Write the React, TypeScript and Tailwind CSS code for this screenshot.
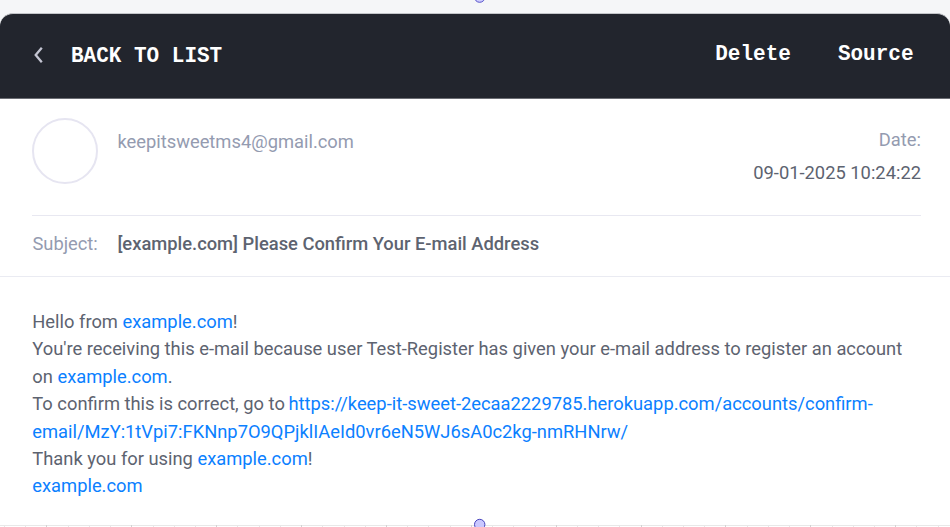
import React from 'react';

const ticks = Array.from({ length: 45 }, (_, i) => ({
  x: 4 + i * 21.22,
  major: i % 4 === 2,
}));

function Link({ children }: { children: React.ReactNode }) {
  return <a className="text-[#0b80ff]">{children}</a>;
}

export default function App() {
  return (
    <div className="relative flex h-[527px] w-[950px] flex-col overflow-hidden bg-[#f5f6f8] pt-[13px] font-[Roboto,sans-serif] text-[18.34px] leading-[27.4px] text-[#5d6370]">
      <header className="flex h-[86px] shrink-0 items-center justify-between rounded-t-[13px] border-y border-t-[#c3c5c9] border-b-[#6b6d73] bg-[#22252d] pr-[36.5px] pl-[33px] font-['Liberation_Mono',monospace] text-[21px] font-bold text-white">
        <div className="flex items-center">
          <svg className="mb-[3px] h-[18px] w-[11px]" viewBox="0 0 11 18" fill="none" stroke="#c4c5d2" strokeWidth="2.3">
            <path d="M8.8 1.8 2.7 9l6.1 7.2" />
          </svg>
          <span className="ml-[27px] inline-block translate-y-px scale-y-[1.05]">BACK TO LIST</span>
        </div>
        <nav className="flex gap-[47px] pb-[4px]">
          <span className="inline-block translate-y-px scale-y-[1.05]">Delete</span>
          <span className="inline-block translate-y-px scale-y-[1.05]">Source</span>
        </nav>
      </header>

      <main className="flex flex-1 flex-col bg-white">
        <section className="mr-[29px] ml-8 flex h-[117px] shrink-0 border-b border-[#e8e8f1] pt-5">
          <div className="-mt-px h-[66px] w-[66px] shrink-0 rounded-full border-2 border-[#e6e5f1]" />
          <div className="ml-[19.4px] pt-[9px] text-[#949bb0]">keepitsweetms4@gmail.com</div>
          <div className="ml-auto text-right">
            <div className="pt-[7px] text-[#949bb0]">Date:</div>
            <div className="pt-[6px]">09-01-2025 10:24:22</div>
          </div>
        </section>
        <section className="flex h-[61px] shrink-0 items-center border-b border-[#eaebf2] pb-[4px] pl-[32.4px]">
          <span className="w-[85px] text-[#949bb0]">Subject:</span>
          <span className="font-medium">[example.com] Please Confirm Your E-mail Address</span>
        </section>
        <section className="flex-1 pt-[30.9px] pl-[32.3px] whitespace-nowrap">
          <p>Hello from <Link>example.com</Link>!</p>
          <p>
            You're receiving this e-mail because user Test-Register has given your e-mail address to register an account
            <br />
            on <Link>example.com</Link>.
          </p>
          <p>
            To confirm this is correct, go to{' '}
            <Link>
              <span className="-ml-px">https://keep-it-sweet-2ecaa2229785.herokuapp.com/accounts/confirm-</span>
              <br />
              email/MzY:1tVpi7:FKNnp7O9QPjklIAeId0vr6eN5WJ6sA0c2kg-nmRHNrw/
            </Link>
          </p>
          <p>Thank you for using <Link>example.com</Link>!</p>
          <p><Link>example.com</Link></p>
        </section>
      </main>

      <svg className="absolute inset-0 h-full w-full" viewBox="0 0 950 527" fill="none">
        <path d="M0 525.5h950" stroke="#e8e8e8" />
        {ticks.map(({ x, major }) => (
          <rect key={x} x={Math.round(x)} y={major ? 525 : 526} width="1" height={major ? 2 : 1} fill={major ? '#d2d2d2' : '#e6e6e6'} />
        ))}
        <circle cx="479.7" cy="-3" r="5.3" fill="#cfcdff" stroke="#5753c9" />
        <circle cx="479.7" cy="524.5" r="5.2" fill="#cac8ff" stroke="#4743bd" />
      </svg>
    </div>
  );
}
